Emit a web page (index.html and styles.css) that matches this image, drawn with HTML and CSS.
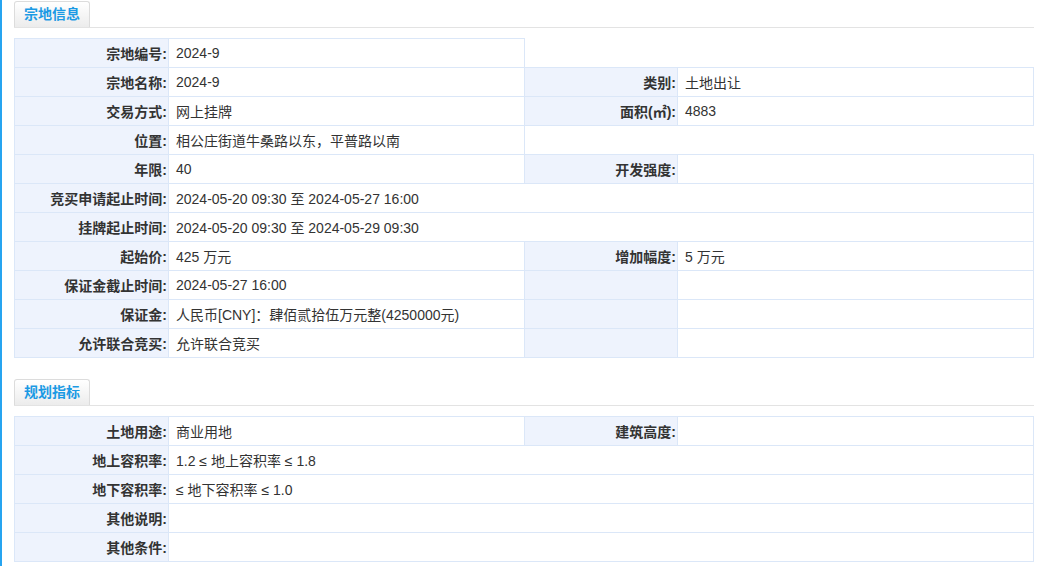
FILE: index.html
```html
<!DOCTYPE html>
<html lang="zh-CN">

<head>
    <meta charset="UTF-8">
    <meta name="viewport" content="width=device-width, initial-scale=1.0">
    <title>宗地详情</title>
    <link rel="stylesheet" href="styles.css">
</head>

<body>
    <div class="page">
        <div class="section_title">
            <span class="tab">宗地信息</span>
        </div>
        <table class="info_table">
            <colgroup>
                <col class="col_label first">
                <col class="col_value">
                <col class="col_label">
                <col class="col_value">
            </colgroup>
            <tr>
                <td class="label">宗地编号:</td>
                <td class="value">2024-9</td>
                <td class="blank" colspan="2"></td>
            </tr>
            <tr>
                <td class="label">宗地名称:</td>
                <td class="value">2024-9</td>
                <td class="label">类别:</td>
                <td class="value">土地出让</td>
            </tr>
            <tr>
                <td class="label">交易方式:</td>
                <td class="value">网上挂牌</td>
                <td class="label">面积(㎡):</td>
                <td class="value">4883</td>
            </tr>
            <tr>
                <td class="label">位置:</td>
                <td class="value">相公庄街道牛桑路以东，平普路以南</td>
                <td class="blank" colspan="2"></td>
            </tr>
            <tr>
                <td class="label">年限:</td>
                <td class="value">40</td>
                <td class="label">开发强度:</td>
                <td class="value"></td>
            </tr>
            <tr>
                <td class="label">竞买申请起止时间:</td>
                <td class="value" colspan="3">2024-05-20 09:30 至 2024-05-27 16:00</td>
            </tr>
            <tr>
                <td class="label">挂牌起止时间:</td>
                <td class="value" colspan="3">2024-05-20 09:30 至 2024-05-29 09:30</td>
            </tr>
            <tr>
                <td class="label">起始价:</td>
                <td class="value">425 万元</td>
                <td class="label">增加幅度:</td>
                <td class="value">5 万元</td>
            </tr>
            <tr>
                <td class="label">保证金截止时间:</td>
                <td class="value">2024-05-27 16:00</td>
                <td class="label"></td>
                <td class="value"></td>
            </tr>
            <tr>
                <td class="label">保证金:</td>
                <td class="value">人民币[CNY]：肆佰贰拾伍万元整(4250000元)</td>
                <td class="label"></td>
                <td class="value"></td>
            </tr>
            <tr>
                <td class="label">允许联合竞买:</td>
                <td class="value">允许联合竞买</td>
                <td class="label"></td>
                <td class="value"></td>
            </tr>
        </table>

        <div class="section_title second">
            <span class="tab">规划指标</span>
        </div>
        <table class="info_table">
            <colgroup>
                <col class="col_label first">
                <col class="col_value">
                <col class="col_label">
                <col class="col_value">
            </colgroup>
            <tr>
                <td class="label">土地用途:</td>
                <td class="value">商业用地</td>
                <td class="label">建筑高度:</td>
                <td class="value"></td>
            </tr>
            <tr>
                <td class="label">地上容积率:</td>
                <td class="value" colspan="3">1.2 ≤ 地上容积率 ≤ 1.8</td>
            </tr>
            <tr>
                <td class="label">地下容积率:</td>
                <td class="value" colspan="3">≤ 地下容积率 ≤ 1.0</td>
            </tr>
            <tr>
                <td class="label">其他说明:</td>
                <td class="value" colspan="3"></td>
            </tr>
            <tr>
                <td class="label">其他条件:</td>
                <td class="value" colspan="3"></td>
            </tr>
        </table>
    </div>
</body>

</html>
```

FILE: styles.css
```css
html,
body {
    margin: 0;
    padding: 0;
    background: #fff;
}

body {
    font-family: "Liberation Sans", "Noto Sans CJK SC", sans-serif;
    font-size: 14px;
    color: #333;
}

.page {
    min-height: 566px;
    border-left: 2px solid #26a4f0;
    padding: 0 9px 0 12px;
    box-sizing: border-box;
    width: 1043px;
}

.section_title {
    height: 27px;
    border-bottom: 1px solid #e3e3e3;
    display: flex;
    align-items: flex-end;
}

.section_title.second {
    margin-top: 20px;
}

.tab {
    display: block;
    height: 25px;
    line-height: 25px;
    padding: 0 9px;
    border: 1px solid #dcdcdc;
    border-bottom: none;
    border-radius: 3px 3px 0 0;
    background: linear-gradient(#fff, #ececec);
    color: #1b9ae4;
    font-size: 14px;
    font-weight: bold;
}

.info_table {
    width: 1019px;
    margin-top: 10px;
    border-collapse: collapse;
    table-layout: fixed;
}

.col_label {
    width: 153px;
}

.col_label.first {
    width: 154px;
}

.col_value {
    width: 356px;
}

.info_table td {
    height: 28px;
    padding: 0;
    border: 1px solid #dbe7f8;
    white-space: nowrap;
}

.info_table td.label {
    background: #eef3fd;
    text-align: right;
    font-weight: bold;
    padding-right: 1px;
}

.info_table td.value {
    padding-left: 7px;
}

.info_table td.blank {
    border: none;
}
```
